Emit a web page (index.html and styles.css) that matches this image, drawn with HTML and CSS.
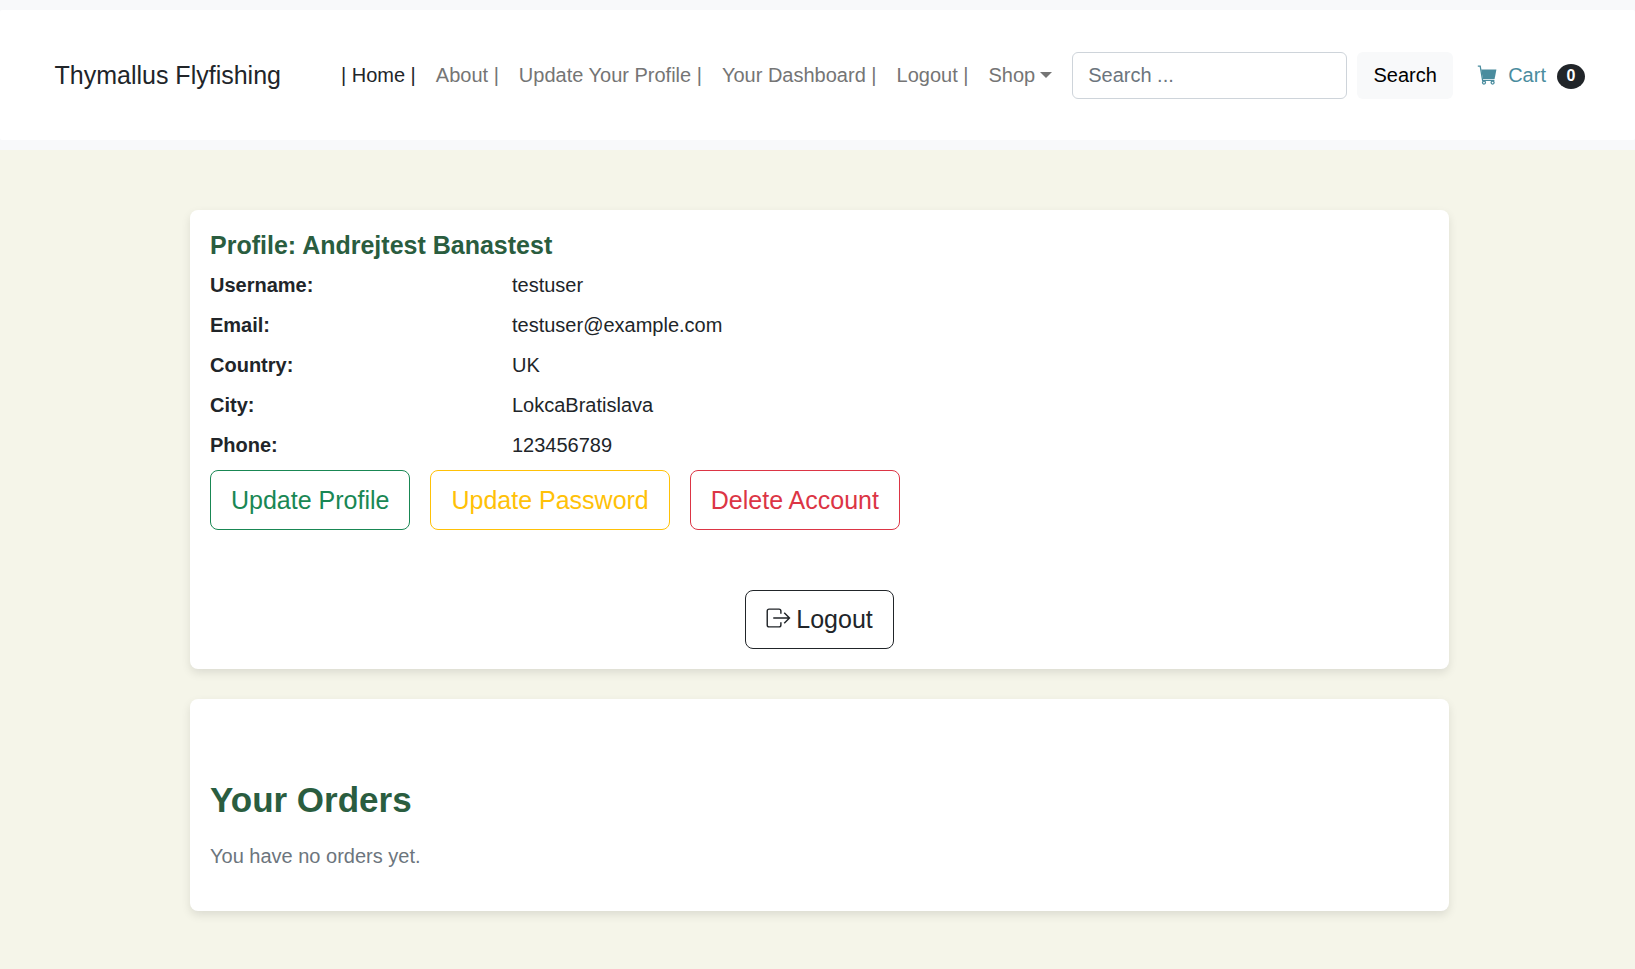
FILE: index.html
```html
<!DOCTYPE html>
<html>
<head>
    <title>Thymallus Flyfishing</title>
    <link rel="stylesheet" href="styles.css">
</head>
<body>
    <header class="site-header">
        <nav class="navbar">
            <a class="brand" href="#">Thymallus Flyfishing</a>
            <ul class="nav-links">
                <li><a class="nav-link active" href="#">| Home |</a></li>
                <li><a class="nav-link" href="#">About |</a></li>
                <li><a class="nav-link" href="#">Update Your Profile |</a></li>
                <li><a class="nav-link" href="#">Your Dashboard |</a></li>
                <li><a class="nav-link" href="#">Logout |</a></li>
                <li><a class="nav-link dropdown" href="#">Shop<span class="caret"></span></a></li>
            </ul>
            <form class="search-form">
                <input class="search-input" type="text" placeholder="Search ...">
                <button class="search-btn" type="button">Search</button>
            </form>
            <a class="cart" href="#">
                <svg class="cart-icon" viewBox="0 0 20 20" width="20" height="20">
                    <path class="cart-fill" d="M4.2 4.6H19.4L17.6 14H5.9Z"/>
                    <path class="cart-line" d="M0.8 1.2H3.2L5.6 15.4H17.4"/>
                    <circle class="cart-line" cx="7" cy="17.6" r="1.5"/>
                    <circle class="cart-line" cx="15.6" cy="17.6" r="1.5"/>
                </svg>
                <span class="cart-label">Cart</span>
                <span class="cart-badge">0</span>
            </a>
        </nav>
    </header>

    <main class="content">
        <section class="card profile-card">
            <h4 class="profile-title">Profile: Andrejtest Banastest</h4>
            <div class="info-row"><strong>Username:</strong><span>testuser</span></div>
            <div class="info-row"><strong>Email:</strong><span>testuser@example.com</span></div>
            <div class="info-row"><strong>Country:</strong><span>UK</span></div>
            <div class="info-row"><strong>City:</strong><span>LokcaBratislava</span></div>
            <div class="info-row"><strong>Phone:</strong><span>123456789</span></div>
            <div class="profile-actions">
                <a class="btn btn-green" href="#">Update Profile</a>
                <a class="btn btn-yellow" href="#">Update Password</a>
                <a class="btn btn-red" href="#">Delete Account</a>
            </div>
            <div class="logout-row">
                <a class="btn btn-dark" href="#">
                    <svg class="logout-icon" viewBox="0 0 26 22" width="25" height="21">
                        <path d="M15.5 6V3.2C15.5 2 14.6 1.2 13.5 1.2H3.2C2 1.2 1.2 2 1.2 3.2V17.8C1.2 19 2 19.8 3.2 19.8H13.5C14.6 19.8 15.5 19 15.5 17.8V15"/>
                        <path d="M7.5 10.5H24.5M19 5L24.5 10.5L19 16"/>
                    </svg>Logout
                </a>
            </div>
        </section>

        <section class="card orders-card">
            <h2 class="orders-title">Your Orders</h2>
            <p class="orders-empty">You have no orders yet.</p>
        </section>
    </main>
</body>
</html>
```

FILE: styles.css
```css
* {
    box-sizing: border-box;
}
body {
    margin: 0;
    min-height: 969px;
    font-family: "Liberation Sans", Arial, sans-serif;
    font-size: 20px;
    line-height: 1.5;
    color: #212529;
    background: #f5f5e9;
}
a {
    text-decoration: none;
}

/* Header */
.site-header {
    padding: 10px 0;
    background: #f8f9fa;
}
.navbar {
    display: flex;
    align-items: center;
    height: 130px;
    padding: 0 50px 0 54.5px;
    background: #fff;
    border-radius: 2px;
}
.brand {
    margin-top: 1px;
    margin-right: 50px;
    font-size: 25px;
    color: #212529;
    white-space: nowrap;
}
.nav-links {
    display: flex;
    margin: 0;
    padding: 0;
    list-style: none;
}
.nav-link {
    display: block;
    padding: 8px 10px;
    color: #757575;
    white-space: nowrap;
}
.nav-link.active {
    color: #212529;
}
.caret {
    display: inline-block;
    margin-left: 5px;
    vertical-align: 4px;
    border-top: 6px solid #757575;
    border-left: 6px solid transparent;
    border-right: 6px solid transparent;
}
.search-form {
    display: flex;
    gap: 10px;
    margin-left: 10px;
}
.search-input {
    width: 275px;
    height: 47px;
    padding: 8px 15px;
    font-family: inherit;
    font-size: 20px;
    color: #212529;
    background: #fff;
    border: 1px solid #ced4da;
    border-radius: 6px;
}
.search-input::placeholder {
    color: #6c757d;
}
.search-btn {
    width: 96px;
    height: 47px;
    font-family: inherit;
    font-size: 20px;
    color: #000;
    background: #f8f9fa;
    border: none;
    border-radius: 6px;
}
.cart {
    display: flex;
    align-items: center;
    margin-left: 24px;
    color: #4a8c9e;
}
.cart-icon {
    margin-right: 11px;
}
.cart-fill {
    fill: #4a8c9e;
}
.cart-line {
    fill: none;
    stroke: #4a8c9e;
    stroke-width: 1.3;
}
.cart-badge {
    display: flex;
    align-items: center;
    justify-content: center;
    width: 28px;
    height: 25px;
    margin-top: 2px;
    margin-left: 11px;
    font-size: 16px;
    font-weight: 700;
    color: #fff;
    background: #212529;
    border-radius: 50%;
}

/* Cards */
.content {
    display: flex;
    flex-direction: column;
    gap: 30px;
    width: 1259px;
    margin: 0 auto;
    padding-top: 60px;
    transform: translateX(2px);
}
.card {
    padding: 20px;
    background: #fff;
    border-radius: 8px;
    box-shadow: 0 4px 10px rgba(0, 0, 0, 0.1);
}
.profile-card {
    height: 459px;
    padding-top: 20px;
}
.profile-title {
    margin: 0 0 10px;
    font-size: 25px;
    line-height: 30px;
    font-weight: 700;
    color: #2a5d3f;
}
.info-row {
    display: grid;
    grid-template-columns: 302px 1fr;
    height: 40px;
}
.profile-actions {
    display: flex;
    gap: 20px;
}
.btn {
    display: inline-block;
    padding: 13px 20px;
    font-size: 25px;
    line-height: 32px;
    white-space: nowrap;
    border: 1px solid;
    border-radius: 8px;
}
.btn-green {
    color: #198754;
    border-color: #198754;
}
.btn-yellow {
    color: #ffc107;
    border-color: #ffc107;
}
.btn-red {
    color: #dc3545;
    border-color: #dc3545;
}
.btn-dark {
    display: flex;
    align-items: center;
    height: 59px;
    padding: 12px 20px 14px;
    color: #212529;
    border-color: #212529;
}
.logout-row {
    display: flex;
    justify-content: center;
    margin-top: 60px;
}
.logout-icon {
    margin-right: 5px;
    fill: none;
    stroke: #212529;
    stroke-width: 1.5;
}
.orders-card {
    height: 212px;
    padding-top: 77px;
}
.orders-title {
    margin: 0 0 17px;
    font-size: 35px;
    line-height: 48px;
    font-weight: 700;
    color: #2a5d3f;
}
.orders-empty {
    margin: 0;
    color: #6c757d;
}
```
